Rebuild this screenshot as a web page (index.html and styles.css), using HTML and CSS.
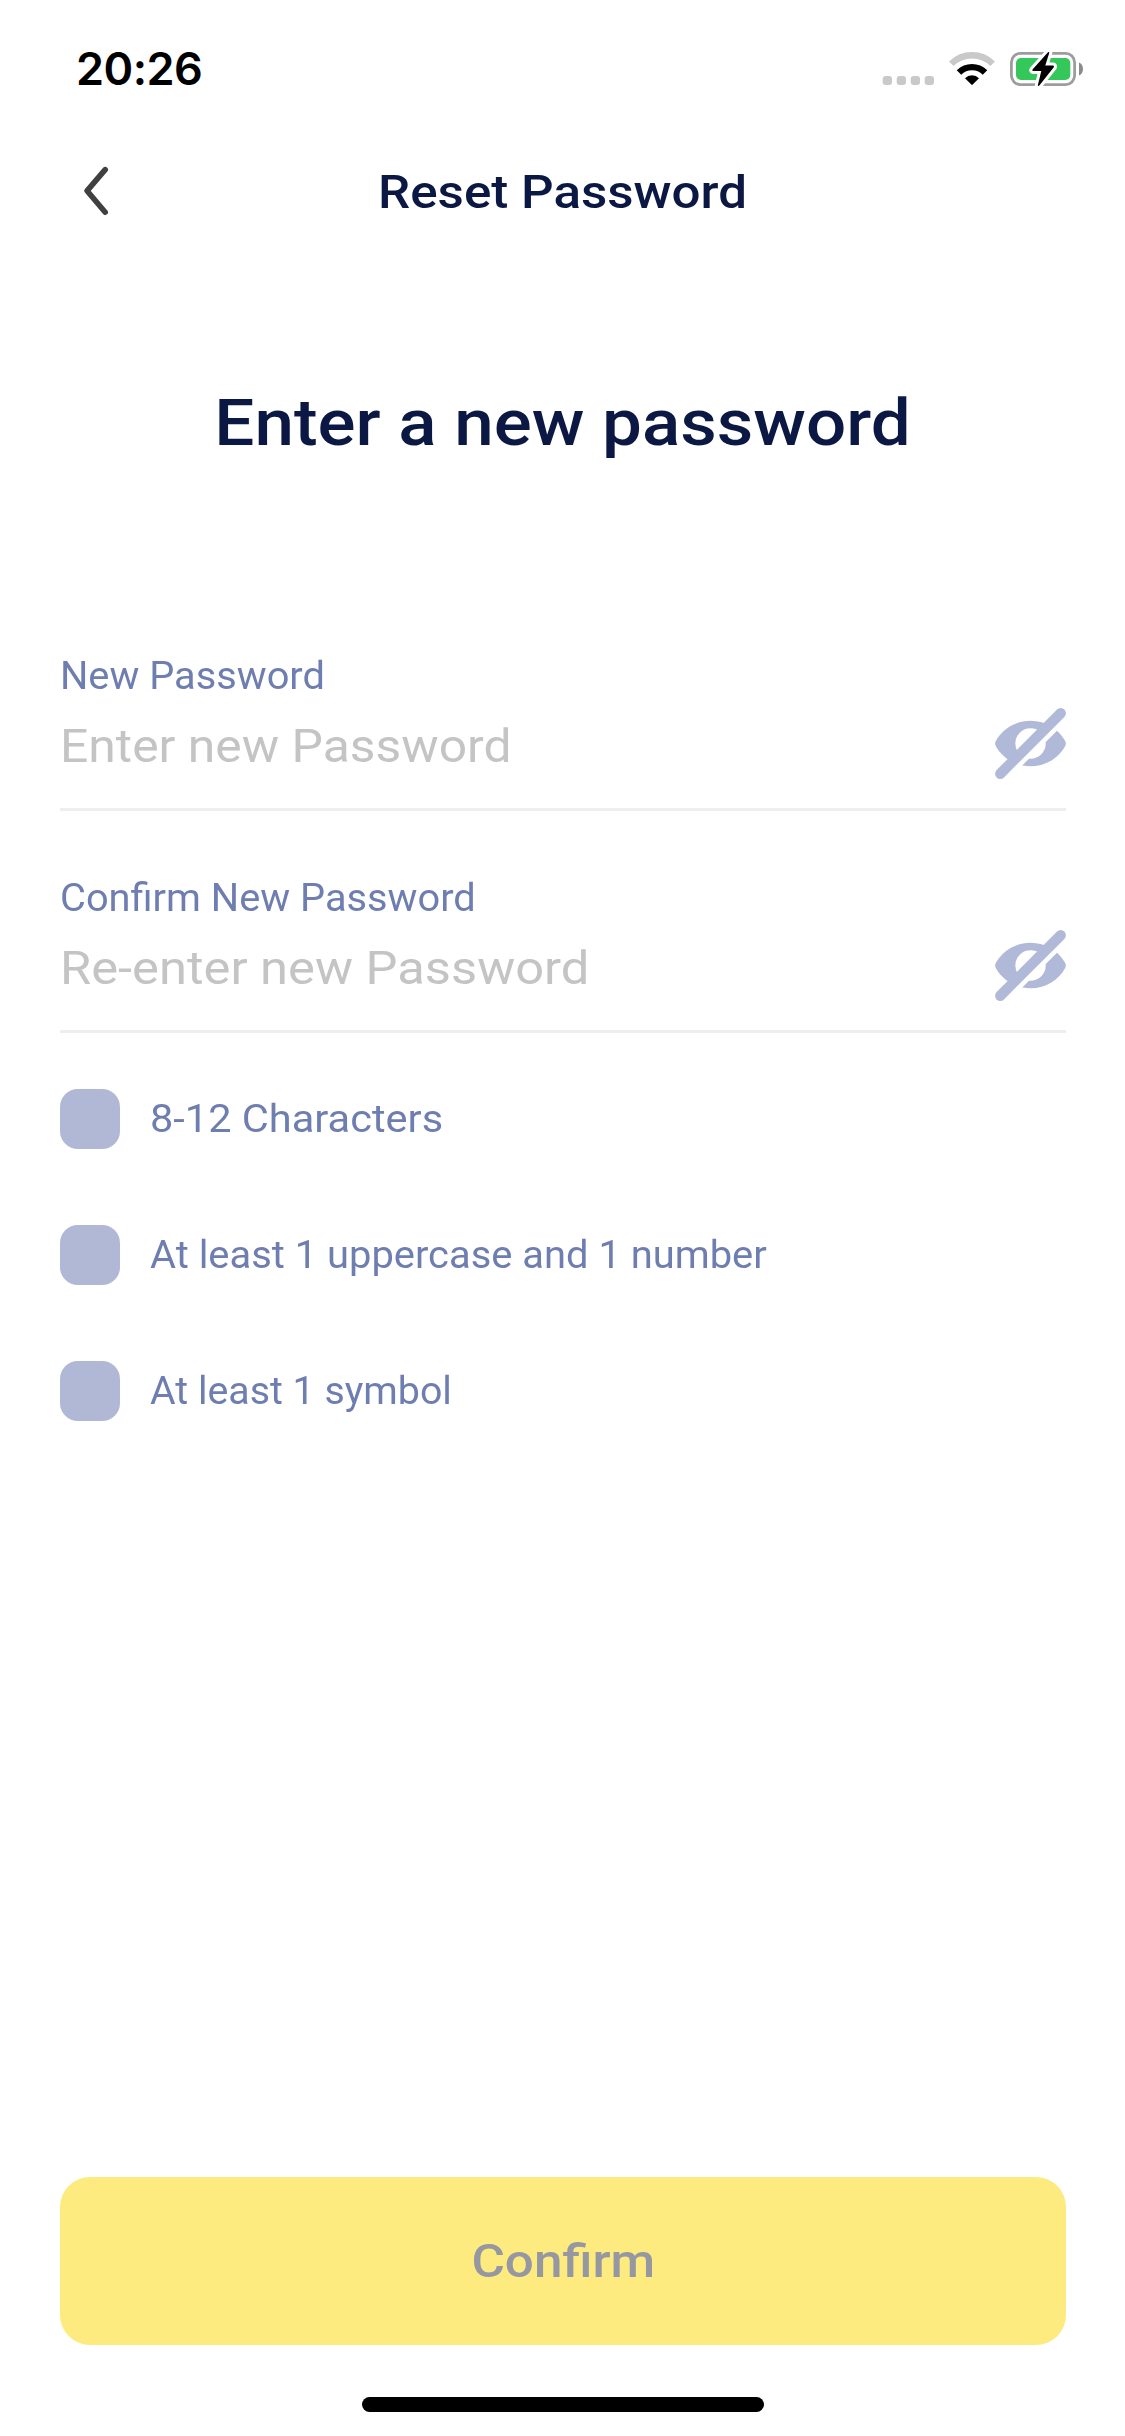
FILE: index.html
```html
<!DOCTYPE html>
<html lang="en">
<head>
<meta charset="utf-8">
<title>Reset Password</title>
<link rel="stylesheet" href="styles.css">
</head>
<body>
<svg class="defs" width="0" height="0" aria-hidden="true">
  <symbol id="eye-off" viewBox="0 0 71 71">
    <mask id="eye-cut" maskUnits="userSpaceOnUse" x="0" y="0" width="71" height="71">
      <rect width="71" height="71" fill="#fff"/>
      <circle cx="35.5" cy="35.5" r="15.2" fill="#000"/>
      <path d="M0 71 71 0 84.7 0 0 84.7Z" fill="#000"/>
    </mask>
    <path mask="url(#eye-cut)" fill="currentColor" d="M.8 33C7 21.500 20 12.700 35.500 12.700S64 21.500 70.200 33Q71.500 35.500 70.200 38C64 49.500 51 58.300 35.500 58.300S7 49.500.8 38Q-.5 35.500.8 33Z"/>
    <path d="M5.300 65.700 65.700 5.300" stroke="currentColor" stroke-width="10.400" stroke-linecap="round"/>
  </symbol>
</svg>
<div class="screen">
  <div class="status">
    <span class="time">20:26</span>
    <svg class="indicators" width="204" height="40" viewBox="881 49 204 40">
      <g fill="#c9c9c9">
        <rect x="882.700" y="76" width="9.300" height="9" rx="3"/>
        <rect x="896.700" y="76" width="9.300" height="9" rx="3"/>
        <rect x="910.700" y="76" width="9.300" height="9" rx="3"/>
        <rect x="924.700" y="76" width="9.300" height="9" rx="3"/>
      </g>
      <path d="M951.300 63.700A29.500 29.500 0 0 1 992.700 63.700" fill="none" stroke="#c9c9c9" stroke-width="6.400"/>
      <path d="M959 72.500A18.500 18.500 0 0 1 985 72.500" fill="none" stroke="#000" stroke-width="6.400"/>
      <path d="M965 78.200A10 10 0 0 1 979 78.200L972.700 84.600Q972 85.200 971.300 84.600Z"/>
      <rect x="1011.400" y="53.400" width="63.200" height="31.200" rx="9" fill="none" stroke="#9d9d9d" stroke-width="2.800"/>
      <rect x="1016" y="58" width="54.300" height="22" rx="5" fill="#34c759"/>
      <path d="M1079 62.500C1084.300 64.500 1084.300 73.500 1079 75.500Z" fill="#8a8a8a"/>
      <path d="M1048 52.300 1032.500 69.500Q1031.800 71 1033.300 71H1041.300L1037.800 85.300Q1038.200 86.700 1039.300 85.600L1053.800 67.300Q1054.500 65.600 1053 65.600H1045.300L1049.300 52.800Q1049 51.400 1048 52.300Z" stroke="#fff" stroke-width="6" stroke-linejoin="round" paint-order="stroke"/>
    </svg>
  </div>
  <header class="nav">
    <svg class="back" width="28" height="54" viewBox="82 164 28 54"><path d="M105.200 169.700 87 190.800 105.200 212.200" fill="none" stroke="#404040" stroke-width="5.600" stroke-linecap="round" stroke-linejoin="round"/></svg>
    <span class="nav-title">Reset Password</span>
  </header>
  <h1 class="heading">Enter a new password</h1>
  <main class="form">
    <div class="field">
      <label class="label" for="new">New Password</label>
      <div class="entry">
        <input class="input" id="new" type="text" placeholder="Enter new Password">
        <svg class="eye" width="71" height="71"><use href="#eye-off"/></svg>
      </div>
    </div>
    <div class="field">
      <label class="label" for="again">Confirm New Password</label>
      <div class="entry">
        <input class="input input-again" id="again" type="text" placeholder="Re-enter new Password">
        <svg class="eye" width="71" height="71"><use href="#eye-off"/></svg>
      </div>
    </div>
    <ul class="rules">
      <li class="rule"><span class="box"></span><span class="rule-text rule-length">8-12 Characters</span></li>
      <li class="rule"><span class="box"></span><span class="rule-text rule-case">At least 1 uppercase and 1 number</span></li>
      <li class="rule"><span class="box"></span><span class="rule-text rule-symbol">At least 1 symbol</span></li>
    </ul>
  </main>
  <footer class="footer">
    <button class="confirm"><span class="confirm-text">Confirm</span></button>
    <div class="home"></div>
  </footer>
</div>
</body>
</html>
```
FILE: styles.css
```css
* { box-sizing: border-box; }

body {
  margin: 0;
  background: #fff;
  font-family: Roboto, "Liberation Sans", sans-serif;
}

.defs { position: absolute; }

.screen {
  display: flex;
  flex-direction: column;
  width: 1125px;
  height: 2436px;
  overflow: hidden;
}

.status {
  display: flex;
  align-items: center;
  justify-content: space-between;
  height: 138px;
  padding: 0 40px 0 76px;
}

.time {
  font: 600 45px/60px Inter, sans-serif;
  letter-spacing: -0.5px;
}

.nav {
  display: grid;
  grid-template-columns: 28px 1fr 28px;
  align-items: center;
  height: 106px;
  padding: 0 82px;
}

/* The type is set slightly wide: each text is stretched sideways only. */
.nav-title {
  padding-top: 1px;
  text-align: center;
  font-size: 47px;
  font-weight: 500;
  line-height: 60px;
  color: #0b1843;
  transform: scaleX(1.088);
}

.heading {
  margin: 139px 0 0;
  text-align: center;
  font-size: 65px;
  font-weight: 500;
  line-height: 80px;
  color: #0b1843;
  transform: scaleX(1.092);
}

.form {
  padding: 188px 59px 0 60px;
}

.field {
  height: 222px;
}

.label {
  display: block;
  font-size: 38.500px;
  line-height: 50px;
  color: #6f7eb0;
  transform: scaleX(1.033);
  transform-origin: 0 50%;
}

.entry {
  display: flex;
  align-items: center;
  justify-content: space-between;
  height: 110px;
  padding-bottom: 22px;
  border-bottom: 3px solid #eee;
}

.input {
  width: 800px;
  height: 74px;
  padding: 4px 0 0;
  border: 0;
  outline: 0;
  background: none;
  font: 400 47px/70px Roboto, "Liberation Sans", sans-serif;
  transform: scaleX(1.06);
  transform-origin: 0 50%;
}

.input-again { transform: scaleX(1.078); }

.input::placeholder { color: #c4c4c4; opacity: 1; }

.eye { color: #b0b9d8; }

.rules {
  display: flex;
  flex-direction: column;
  gap: 76px;
  margin: -6px 0 0;
  padding: 0;
  list-style: none;
}

.rule {
  display: flex;
  align-items: center;
  gap: 30px;
  height: 60px;
}

.rule-text {
  font-size: 38.500px;
  line-height: 60px;
  color: #6f7eb0;
  transform-origin: 0 50%;
}

.rule-length { transform: scaleX(1.079); }
.rule-case { transform: scaleX(1.036); }
.rule-symbol { transform: scaleX(1.021); }

.box {
  width: 60px;
  height: 60px;
  border-radius: 18px;
  background: #b0b8d6;
}

.footer {
  display: flex;
  flex-direction: column;
  align-items: center;
  gap: 52px;
  margin-top: auto;
  padding: 0 59px 24px 60px;
}

.confirm {
  width: 100%;
  height: 168px;
  padding: 0;
  border: 0;
  border-radius: 30px;
  background: #feeb80;
  color: #9597a1;
  font: 500 47px/60px Roboto, "Liberation Sans", sans-serif;
}

.confirm-text {
  display: inline-block;
  transform: scaleX(1.09);
}

.home {
  width: 402px;
  height: 15px;
  border-radius: 8px;
  background: #000;
}
```
